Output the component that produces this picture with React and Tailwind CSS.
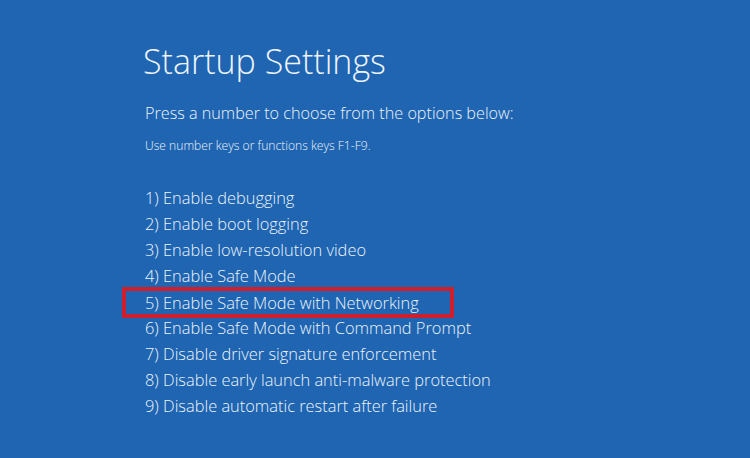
import React from "react";

const options = [
  "1) Enable debugging",
  "2) Enable boot logging",
  "3) Enable low-resolution video",
  "4) Enable Safe Mode",
  "5) Enable Safe Mode with Networking",
  "6) Enable Safe Mode with Command Prompt",
  "7) Disable driver signature enforcement",
  "8) Disable early launch anti-malware protection",
  "9) Disable automatic restart after failure",
];

const App = () => {
  return (
    <div
      className="w-[750px] h-[458px] overflow-hidden bg-[#1f65b1] text-[#eef4fb] pl-[143px] pt-[38px]"
      style={{ fontFamily: '"Open Sans", "Noto Sans", sans-serif' }}
    >
      <h1 className="text-[34px] leading-[46px] font-light">Startup Settings</h1>
      <p className="mt-[17px] ml-[2px] text-[16.2px] leading-[24px] font-light">
        Press a number to choose from the options below:
      </p>
      <p className="mt-[13px] ml-[2px] text-[12.1px] leading-[16px] font-light">
        Use number keys or functions keys F1-F9.
      </p>
      <ul className="mt-[31px] ml-[2px] text-[16.4px] font-light">
        {options.map((opt, i) =>
          i === 4 ? (
            <li key={opt} className="-ml-[23px] w-[332px] h-[31px] -my-[2.5px] pl-[19px] border-solid border-4 border-[#d01f2c] leading-[23px]">
              {opt}
            </li>
          ) : (
            <li key={opt} className="leading-[26px]">
              {opt}
            </li>
          )
        )}
      </ul>
    </div>
  );
};

export default App;
